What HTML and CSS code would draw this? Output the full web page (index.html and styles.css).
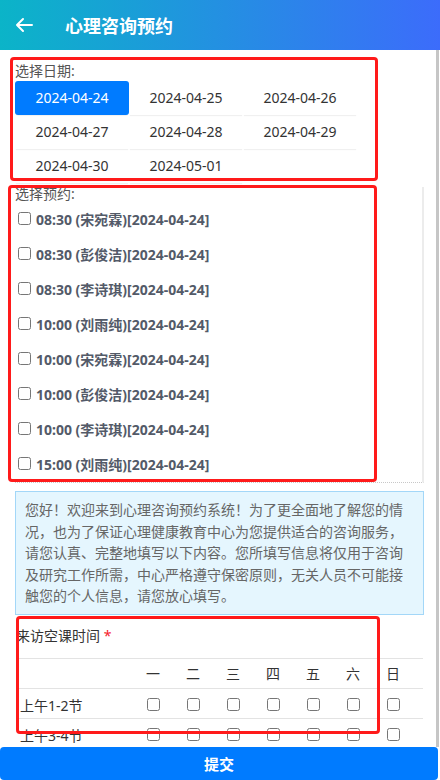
FILE: index.html
```html
<!DOCTYPE html>
<html lang="zh-CN">
<head>
<meta charset="UTF-8" />
<meta name="viewport" content="width=device-width, initial-scale=1" />
<title>心理咨询预约</title>
<link rel="stylesheet" href="styles.css">
</head>
<body>

<header class="topbar">
  <span class="back">
    <svg width="20" height="16" viewBox="0 0 20 16"><path d="M18 8H3M9 2L3 8l6 6" fill="none" stroke="#fff" stroke-width="2" stroke-linecap="round" stroke-linejoin="round"/></svg>
  </span>
  <h1>心理咨询预约</h1>
</header>

<main class="content">
  <section class="dates">
    <div class="field-label">选择日期:</div>
    <div class="date-grid">
      <div class="date active">2024-04-24</div>
      <div class="date">2024-04-25</div>
      <div class="date">2024-04-26</div>
      <div class="date">2024-04-27</div>
      <div class="date">2024-04-28</div>
      <div class="date">2024-04-29</div>
      <div class="date">2024-04-30</div>
      <div class="date">2024-05-01</div>
    </div>
  </section>

  <section class="slots" id="slots">
    <div class="field-label">选择预约:</div>
  </section>

  <div class="notice">您好！欢迎来到心理咨询预约系统！为了更全面地了解您的情况，也为了保证心理健康教育中心为您提供适合的咨询服务，请您认真、完整地填写以下内容。您所填写信息将仅用于咨询及研究工作所需，中心严格遵守保密原则，无关人员不可能接触您的个人信息，请您放心填写。</div>

  <div class="form-item">
    <div class="form-label">来访空课时间 <span class="req">*</span></div>
    <div class="week-table" id="week-table">
      <div class="week-row head">
        <span></span><span>一</span><span>二</span><span>三</span><span>四</span><span>五</span><span>六</span><span>日</span>
      </div>
    </div>
  </div>

  <div class="mark mark-dates"></div>
  <div class="mark mark-slots"></div>
  <div class="mark mark-table"></div>
</main>

<button class="submit">提交</button>

<script>
  const slots = [
    ['08:30', ['宋宛霖', '彭俊洁', '李诗琪']],
    ['10:00', ['刘雨纯', '宋宛霖', '彭俊洁', '李诗琪']],
    ['15:00', ['刘雨纯', '宋宛霖', '彭俊洁', '李诗琪']],
    ['16:30', ['刘雨纯', '宋宛霖', '彭俊洁', '李诗琪']],
    ['19:00', ['刘雨纯', '宋宛霖', '彭俊洁', '李诗琪']]
  ];
  const list = document.getElementById('slots');
  slots.forEach(([time, names]) => {
    names.forEach(name => {
      const row = document.createElement('label');
      row.className = 'slot';
      row.innerHTML = `<input type="checkbox"><span>${time} (${name})[2024-04-24]</span>`;
      list.appendChild(row);
    });
  });

  const periods = ['上午1-2节', '上午3-4节', '下午5-6节', '下午7-8节', '晚上9-11节'];
  const table = document.getElementById('week-table');
  periods.forEach(p => {
    const row = document.createElement('div');
    row.className = 'week-row';
    row.innerHTML = `<span>${p}</span>` + '<span><input type="checkbox"></span>'.repeat(7);
    table.appendChild(row);
  });

  document.querySelectorAll('.date').forEach(d => {
    d.addEventListener('click', () => {
      document.querySelectorAll('.date').forEach(x => x.classList.remove('active'));
      d.classList.add('active');
    });
  });
</script>

</body>
</html>
```

FILE: styles.css
```css
html, body { margin: 0; height: 100%; }
body { display: flex; flex-direction: column; font-family: "Noto Sans", "Noto Sans CJK SC", sans-serif; font-size: 14px; color: #333; background: #fff; }

.topbar { flex: none; height: 50px; display: flex; align-items: center; background: linear-gradient(90deg, #0bb4c8, #3c6cfb); color: #fff; }
.topbar .back { width: 65px; display: flex; padding-left: 14px; box-sizing: border-box; }
.topbar h1 { margin: 0; font-size: 18px; font-weight: bold; }

/* scrollbars are hidden in the screenshot browser, so the rails are drawn as borders */
.content { flex: 1; position: relative; overflow-y: auto; padding: 11px 0 60px 15px; margin-right: 1px; border-right: 3px solid #c6c6c6; }
.content::-webkit-scrollbar { width: 4px; }
.content::-webkit-scrollbar-thumb { background: #c4c4c4; }

.field-label { color: #555; line-height: 20px; }

.date-grid { display: grid; grid-template-columns: repeat(3, 114px); }
.date { height: 34px; line-height: 34px; text-align: center; color: #333; box-shadow: 0 2px 1px -1px #f0f0f0; }
.date.active { background: #007bff; color: #fff; border-radius: 3px; }

.slots { width: 407px; height: 295px; margin-top: 4px; overflow-y: auto; border-bottom: 1px dotted #c8c8c8; border-right: 2px solid #ececec; }
.slots .field-label { line-height: 14px; }
.slots::-webkit-scrollbar { width: 3px; }
.slots::-webkit-scrollbar-track { background: #eee; }
.slots::-webkit-scrollbar-thumb { background: #bbb; }
.slot { display: flex; align-items: center; height: 35px; font-weight: bold; color: #535a68; }
.slot input { margin: 0 5px 0 3px; }

.notice { width: 390px; margin-top: 8px; padding: 7px 8px 7px 9px; background: #e5f6fe; border: 1px solid #a3d7f8; color: #666; line-height: 21.5px; }

.form-item { margin-top: 11px; }
.form-label { line-height: 20px; margin-left: 1px; }
.req { color: #f5222d; }
.week-table { width: 405px; margin: 12px 0 0 3px; }
.week-row { display: grid; grid-template-columns: 115px repeat(7, 40px); height: 29px; align-items: center; border-top: 1px solid #e3e3e3; }
.week-row span { text-align: center; }
.week-row span:first-child { text-align: left; padding-left: 2px; padding-top: 3px; }
.week-row input { margin: 0; vertical-align: middle; }
.week-row.head span { padding-top: 0; }

.mark { position: absolute; border: 3px solid #ff1a1a; border-radius: 4px; box-sizing: border-box; pointer-events: none; }
.mark-dates { left: 10px; top: 7px; width: 368px; height: 124px; }
.mark-slots { left: 8px; top: 135px; width: 369px; height: 297px; }
.mark-table { left: 16px; top: 566px; width: 364px; height: 118px; }

.submit { flex: none; width: 438px; height: 33px; border: none; border-radius: 4px; background: #007bff; color: #fff; font-family: inherit; font-size: 15px; font-weight: bold; }
```
